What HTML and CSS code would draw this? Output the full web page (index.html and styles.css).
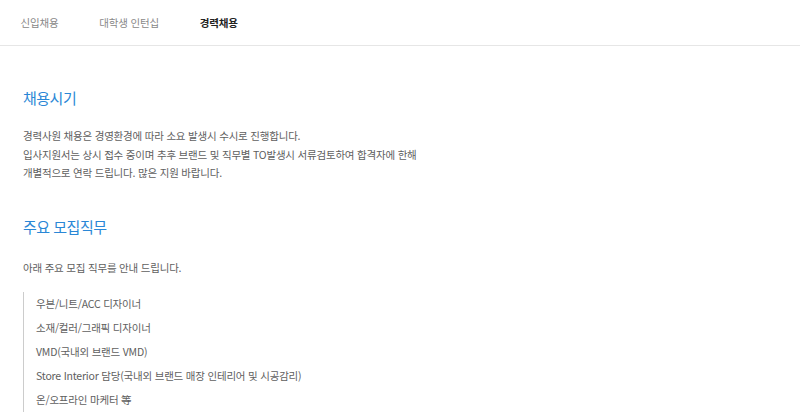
FILE: index.html
```html
<!DOCTYPE html>
<html lang="ko">
<head>
    <meta charset="UTF-8">
    <meta name="viewport" content="width=device-width, initial-scale=1.0">
    <title>경력채용</title>
    <link rel="stylesheet" href="styles.css">
</head>
<body>

    <div class="tabs">
        <a class="tab">신입채용</a>
        <a class="tab">대학생 인턴십</a>
        <a class="tab active">경력채용</a>
    </div>

    <div class="content">
        <h2 class="title">채용시기</h2>
        <p class="desc">
            경력사원 채용은 경영환경에 따라 소요 발생시 수시로 진행합니다.<br>
            입사지원서는 상시 접수 중이며 추후 브랜드 및 직무별 TO발생시 서류검토하여 합격자에 한해<br>
            개별적으로 연락 드립니다. 많은 지원 바랍니다.
        </p>

        <h2 class="title second">주요 모집직무</h2>
        <p class="desc lead">아래 주요 모집 직무를 안내 드립니다.</p>

        <ul class="jobs">
            <li>우븐/니트/ACC 디자이너</li>
            <li>소재/컬러/그래픽 디자이너</li>
            <li>VMD(국내외 브랜드 VMD)</li>
            <li>Store Interior 담당(국내외 브랜드 매장 인테리어 및 시공감리)</li>
            <li>온/오프라인 마케터 等</li>
        </ul>
    </div>

</body>
</html>
```

FILE: styles.css
```css
body {
    margin: 0;
    background: #fff;
    font-family: "Noto Sans CJK KR", "Noto Sans", sans-serif;
    color: #666;
}

.tabs {
    display: flex;
    height: 45px;
    align-items: center;
    border-bottom: 1px solid #e6e6e6;
}

.tab {
    margin: 0 20.5px;
    font-size: 10.5px;
    color: #888;
    letter-spacing: -0.2px;
}

.tab.active {
    color: #222;
    font-weight: bold;
}

.content {
    padding: 39px 23px 0;
}

.title {
    margin: 0;
    font-size: 15px;
    font-weight: normal;
    color: #2a87d6;
    line-height: 26px;
    letter-spacing: -0.5px;
}

.title.second {
    margin-top: 31px;
}

.desc {
    margin: 16px 0 0;
    font-size: 10.5px;
    line-height: 18.5px;
    color: #606060;
    letter-spacing: -0.2px;
}

.desc.lead {
    margin-top: 19px;
}

.jobs {
    list-style: none;
    margin: 15px 0 0;
    padding: 0 0 0 12px;
    border-left: 1px solid #ccc;
}

.jobs li {
    font-size: 10.5px;
    line-height: 24px;
    color: #606060;
    letter-spacing: -0.2px;
}
```
